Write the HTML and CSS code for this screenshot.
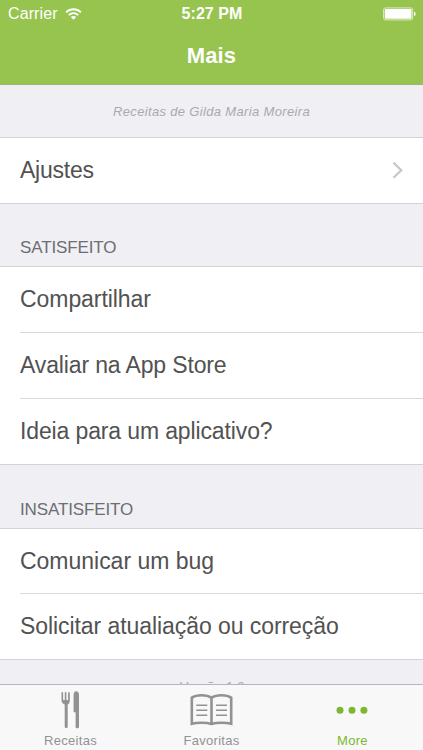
FILE: index.html
```html
<!DOCTYPE html>
<html lang="pt">
<head>
<meta charset="utf-8">
<title>Mais</title>
<link rel="stylesheet" href="styles.css">
</head>
<body>
<div class="app">
  <header class="header">
    <div class="status">
      <div class="carrier">
        <span class="carrier-name">Carrier</span>
        <svg width="17" height="12" viewBox="0 0 17 12" fill="none" stroke="#fff" stroke-width="1.9"><path d="M1.1 4.3C5 .2 12 .2 15.9 4.3M3.8 7.1c2.6-2.7 6.8-2.7 9.4 0"/><path d="M5.8 9.1c1.5-1.5 3.9-1.5 5.4 0L8.5 11.8z" fill="#fff" stroke="none"/></svg>
      </div>
      <span class="time">5:27 PM</span>
      <svg class="battery" width="33" height="14" viewBox="0 0 33 14"><rect x=".6" y=".9" width="29" height="12" rx="1.8" fill="none" stroke="#fff" stroke-opacity=".65"/><rect x="1.8" y="2" width="26.7" height="9.8" rx=".7" fill="#fff"/><path d="M31 4.8c2.2.7 2.2 3.6 0 4.3z" fill="#fff"/></svg>
    </div>
    <h1 class="title">Mais</h1>
  </header>
  <main class="content">
    <p class="byline">Receitas de Gilda Maria Moreira</p>
    <ul class="list">
      <li class="row"><span class="t-ajustes">Ajustes</span><svg class="chevron" width="12" height="18" viewBox="0 0 12 18" fill="none" stroke="#c7c7cc" stroke-width="2.3"><path d="M1.500.7 9.200 8.200l-7.700 7.500"/></svg></li>
    </ul>
    <h2 class="section first">SATISFEITO</h2>
    <ul class="list">
      <li class="row"><span class="t-share">Compartilhar</span></li>
      <li class="row"><span class="t-rate">Avaliar na App Store</span></li>
      <li class="row"><span class="t-idea">Ideia para um aplicativo?</span></li>
    </ul>
    <h2 class="section second">INSATISFEITO</h2>
    <ul class="list last">
      <li class="row"><span class="t-bug">Comunicar um bug</span></li>
      <li class="row"><span class="t-fix">Solicitar atualiação ou correção</span></li>
    </ul>
    <p class="version">Versão 1.0</p>
  </main>
  <nav class="tabs">
    <a class="tab">
      <svg width="42" height="40" viewBox="0 0 42 40" fill="#929292"><path d="M12.2 3c.6 0 .9.3.9.9v6.6c0 .9 1.7.9 1.7 0V3.8c0-1.1 1.6-1.1 1.6 0v6.7c0 .9 1.7.9 1.7 0V3.9c0-1.2 1.7-1.2 1.7 0v7.6c0 2.3-1.1 3.4-2.1 4.1v22c0 2.1-3 2.1-3 0v-22c-1.2-.7-3.2-1.8-3.2-4.1V3.9c0-.6.3-.9.7-.9zM23.6 23.2V5.7c0-4.6 5.4-4.6 5.4 0v32c0 2.1-3.4 2.1-3.4 0V23.2z"/></svg>
      <span class="l-rec">Receitas</span>
    </a>
    <a class="tab">
      <svg width="44" height="40" viewBox="0 0 44 40" fill="none" stroke="#929292" stroke-width="2.6"><path d="M21.5 8.6C16.5 5.4 6.5 5.4 1.8 8.6v26.2c5-1.4 14.8-1.4 19.7.1 4.9-1.5 14.7-1.5 19.7-.1V8.6C36.5 5.4 26.5 5.4 21.5 8.6zM21.5 8.6v26.3"/><path stroke-width="1.4" d="M6.3 16.3h11M6.3 21.3h11M6.3 26.3h11M26 16.3h11M26 21.3h11M26 26.3h11"/></svg>
      <span class="l-fav">Favoritas</span>
    </a>
    <a class="tab active">
      <svg width="40" height="40" viewBox="0 0 40 40" fill="#7db72f"><circle cx="7" cy="21.2" r="3.5"/><circle cx="19" cy="21.2" r="3.5"/><circle cx="30.9" cy="21.2" r="3.5"/></svg>
      <span class="l-more">More</span>
    </a>
  </nav>
</div>
</body>
</html>
```
FILE: styles.css
```css
* { box-sizing: border-box; margin: 0; padding: 0; }
body { font-family: "Liberation Sans", Arial, sans-serif; color: #525252; background: #efeff4; overflow: hidden; }
.app { width: 423px; height: 750px; display: flex; flex-direction: column; overflow: hidden; }

.header { height: 85px; flex: none; background: #96c44f; border-bottom: 1px solid #a0b080; color: #fff; }
.status { height: 28px; display: grid; grid-template-columns: 1fr auto 1fr; align-items: center; padding: 0 7px 0 8px; }
.carrier { display: flex; align-items: center; gap: 7px; }
.carrier-name { font-size: 16px; letter-spacing: .1px; }
.time { font-size: 16px; font-weight: bold; letter-spacing: .05px; }
.battery { justify-self: end; }
.title { font-size: 22px; line-height: 28px; text-align: center; margin-top: 14px; letter-spacing: .15px; }

.content { flex: 1; min-height: 0; overflow: hidden; }
.byline { height: 52px; line-height: 53px; text-align: center; font-size: 13px; font-style: italic; color: #aaaaae; letter-spacing: .34px; }
.list { list-style: none; background: #fff; border-top: 1px solid #d2d2d7; border-bottom: 1px solid #d2d2d7; }
.row { height: 65px; margin-left: 20px; padding-right: 19px; display: flex; align-items: center; justify-content: space-between; font-size: 23px; white-space: nowrap; }
.row + .row { height: 66px; border-top: 1px solid #d9d9dc; }
.last .row { height: 64px; }
.last .row + .row { height: 66px; }
.t-ajustes { letter-spacing: -.22px; }
.t-share { letter-spacing: -.06px; }
.t-rate { letter-spacing: -.14px; }
.t-idea { letter-spacing: -.13px; }
.t-bug { letter-spacing: -.02px; }
.t-fix { letter-spacing: -.07px; }
.section { font-size: 17px; line-height: 20px; font-weight: normal; color: #6d6d72; padding: 34px 20px 0; letter-spacing: -.12px; }
.first { height: 62px; }
.second { height: 63px; padding-top: 35px; }
.version { text-align: center; font-size: 13px; line-height: 16px; padding-top: 19px; font-style: italic; color: #aaaaae; letter-spacing: .27px; }

.tabs { height: 66px; flex: none; display: grid; grid-template-columns: repeat(3, 1fr); background: #f8f8f8; border-top: 1px solid #b5b5ba; color: #929292; }
.tab { display: flex; flex-direction: column; align-items: center; padding-top: 4px; font-size: 13px; line-height: 16px; letter-spacing: .3px; }
.tab svg { margin-bottom: 4px; }
.active { color: #7db72f; }
```
